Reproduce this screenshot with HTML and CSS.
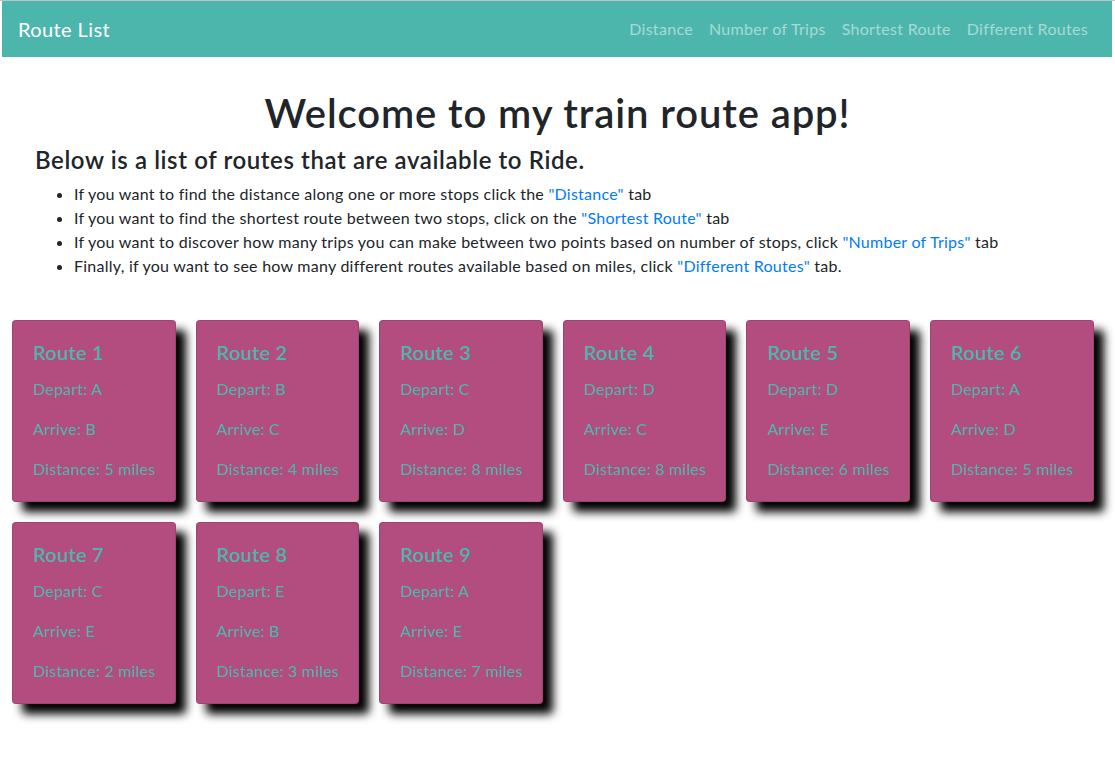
FILE: index.html
```html
<!DOCTYPE html>
<html lang="en">
<head>
<meta charset="utf-8">
<title>Route List</title>
<link rel="stylesheet" href="styles.css">
</head>
<body>
<div class="page">
  <nav class="navbar">
    <a class="brand" href="#">Route List</a>
    <ul class="nav-links">
      <li><a href="#">Distance</a></li>
      <li><a href="#">Number of Trips</a></li>
      <li><a href="#">Shortest Route</a></li>
      <li><a href="#">Different Routes</a></li>
    </ul>
  </nav>
  <main class="content">
    <h1 class="title">Welcome to my train route app!</h1>
    <h4 class="subtitle">Below is a list of routes that are available to Ride.</h4>
    <ul class="instructions">
      <li>If you want to find the distance along one or more stops click the <a href="#">"Distance"</a> tab</li>
      <li>If you want to find the shortest route between two stops, click on the <a href="#">"Shortest Route"</a> tab</li>
      <li>If you want to discover how many trips you can make between two points based on number of stops, click <a href="#">"Number of Trips"</a> tab</li>
      <li>Finally, if you want to see how many different routes available based on miles, click <a href="#">"Different Routes"</a> tab.</li>
    </ul>
    <div class="cards">
      <div class="card"><h5 class="card-title">Route 1</h5><p>Depart: A</p><p>Arrive: B</p><p>Distance: 5 miles</p></div>
      <div class="card"><h5 class="card-title">Route 2</h5><p>Depart: B</p><p>Arrive: C</p><p>Distance: 4 miles</p></div>
      <div class="card"><h5 class="card-title">Route 3</h5><p>Depart: C</p><p>Arrive: D</p><p>Distance: 8 miles</p></div>
      <div class="card"><h5 class="card-title">Route 4</h5><p>Depart: D</p><p>Arrive: C</p><p>Distance: 8 miles</p></div>
      <div class="card"><h5 class="card-title">Route 5</h5><p>Depart: D</p><p>Arrive: E</p><p>Distance: 6 miles</p></div>
      <div class="card"><h5 class="card-title">Route 6</h5><p>Depart: A</p><p>Arrive: D</p><p>Distance: 5 miles</p></div>
      <div class="card"><h5 class="card-title">Route 7</h5><p>Depart: C</p><p>Arrive: E</p><p>Distance: 2 miles</p></div>
      <div class="card"><h5 class="card-title">Route 8</h5><p>Depart: E</p><p>Arrive: B</p><p>Distance: 3 miles</p></div>
      <div class="card"><h5 class="card-title">Route 9</h5><p>Depart: A</p><p>Arrive: E</p><p>Distance: 7 miles</p></div>
    </div>
  </main>
</div>
</body>
</html>
```
FILE: styles.css
```css
* { box-sizing: border-box; }
html, body { margin: 0; padding: 0; background: #fff; }
body {
  font-family: Lato, "Liberation Sans", sans-serif;
  font-size: 16px;
  line-height: 1.5;
  color: #212529;
  letter-spacing: 0.25px;
}
.page { border-top: 1px solid #c4c4c4; }
.navbar {
  margin: 0 3px 0 2px;
  height: 56px;
  background: #4db6ac;
  display: flex;
  align-items: center;
  justify-content: space-between;
  padding: 0 16px;
}
.brand {
  color: #fff;
  font-size: 20px;
  text-decoration: none;
  line-height: 30px;
  letter-spacing: 0.4px;
}
.nav-links {
  list-style: none;
  display: flex;
  margin: 0;
  padding: 0;
}
.nav-links a {
  display: block;
  padding: 8px 8px;
  color: rgba(255,255,255,0.5);
  text-decoration: none;
  letter-spacing: 0.3px;
}
.content { padding: 0 0 40px 0; }
.title {
  margin: 32px 0 8px;
  text-align: center;
  font-size: 40px;
  font-weight: 600;
  line-height: 48px;
  letter-spacing: 0.9px;
}
.subtitle {
  margin: 0 0 8px 35px;
  font-size: 24px;
  font-weight: 600;
  line-height: 29px;
  letter-spacing: 0.6px;
}
.instructions {
  margin: 0 0 42px 0;
  padding-left: 74px;
}
.instructions a { color: #007bff; text-decoration: none; }
.cards {
  display: grid;
  grid-template-columns: repeat(6, 163.6px);
  gap: 20px;
  padding-left: 12px;
}
.card {
  background: #b34d80;
  border: 1px solid rgba(0,0,0,0.125);
  border-radius: 4px;
  padding: 19px 20px 20px;
  color: #4db6ac;
  box-shadow: 10px 10px 10px #000;
}
.card-title {
  margin: 0 0 13px;
  font-size: 20px;
  font-weight: 600;
  line-height: 24px;
}
.card p {
  margin: 0 0 16px;
  white-space: nowrap;
  letter-spacing: 0.2px;
}
.card p:last-child { margin-bottom: 0; }
```
